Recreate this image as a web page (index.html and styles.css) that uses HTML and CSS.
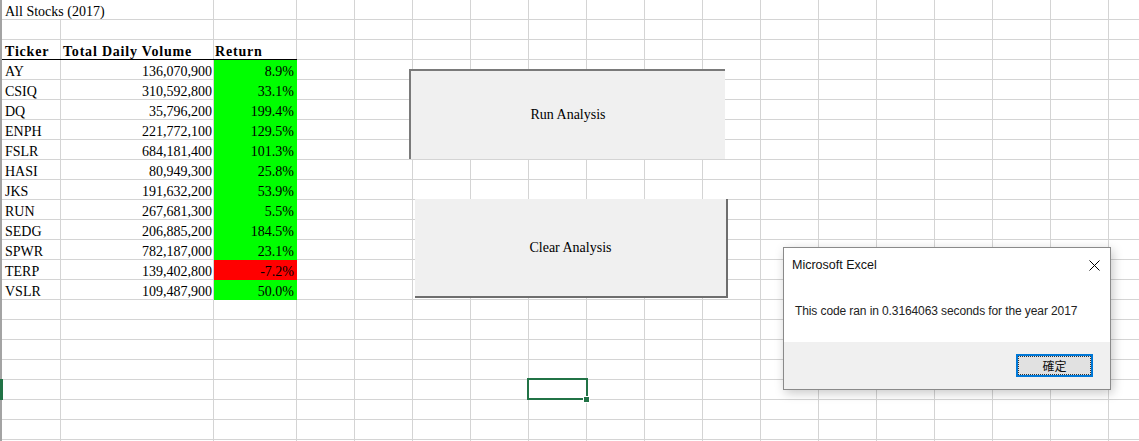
FILE: index.html
```html
<!DOCTYPE html>
<html lang="en">
<head>
<meta charset="utf-8">
<title>All Stocks (2017)</title>
<link rel="stylesheet" href="styles.css">
</head>
<body>
<div class="sheet">
  <div class="rail">
    <div class="rail-gap"></div>
    <div class="rail-active"></div>
  </div>
  <div class="cells">
    <div class="cell title">All Stocks (2017)</div>
    <div class="cell"></div>
    <div class="cell"></div>
    <div class="cell"></div>
    <div class="cell"></div>

    <div class="cell head">Ticker</div>
    <div class="cell head">Total Daily Volume</div>
    <div class="cell head">Return</div>

    <div class="cell">AY</div><div class="cell num">136,070,900</div><div class="cell pct up">8.9%</div>
    <div class="cell">CSIQ</div><div class="cell num">310,592,800</div><div class="cell pct up">33.1%</div>
    <div class="cell">DQ</div><div class="cell num">35,796,200</div><div class="cell pct up">199.4%</div>
    <div class="cell">ENPH</div><div class="cell num">221,772,100</div><div class="cell pct up">129.5%</div>
    <div class="cell">FSLR</div><div class="cell num">684,181,400</div><div class="cell pct up">101.3%</div>
    <div class="cell">HASI</div><div class="cell num">80,949,300</div><div class="cell pct up">25.8%</div>
    <div class="cell">JKS</div><div class="cell num">191,632,200</div><div class="cell pct up">53.9%</div>
    <div class="cell">RUN</div><div class="cell num">267,681,300</div><div class="cell pct up">5.5%</div>
    <div class="cell">SEDG</div><div class="cell num">206,885,200</div><div class="cell pct up">184.5%</div>
    <div class="cell">SPWR</div><div class="cell num">782,187,000</div><div class="cell pct up">23.1%</div>
    <div class="cell">TERP</div><div class="cell num">139,402,800</div><div class="cell pct down">-7.2%</div>
    <div class="cell">VSLR</div><div class="cell num">109,487,900</div><div class="cell pct up">50.0%</div>
  </div>

  <div class="btn btn-run">Run Analysis</div>
  <div class="btn btn-clear">Clear Analysis</div>

  <div class="selection"><span class="handle"></span></div>

  <div class="dialog">
    <div class="dlg-title">
      <span>Microsoft Excel</span>
      <svg class="dlg-close" width="11" height="11" viewBox="0 0 11 11"><path d="M0.5 0.5 L10.5 10.5 M10.5 0.5 L0.5 10.5" stroke="#000" stroke-width="1" fill="none"/></svg>
    </div>
    <div class="dlg-body">This code ran in 0.3164063 seconds for the year 2017</div>
    <div class="dlg-foot">
      <div class="dlg-ok"><span class="dlg-ok-inner">確定</span></div>
    </div>
  </div>
</div>
</body>
</html>
```
FILE: styles.css
```css
html, body {
  margin: 0;
  padding: 0;
  background: #fff;
}

.sheet {
  position: relative;
  width: 1139px;
  height: 441px;
  overflow: hidden;
  display: flex;
  align-items: flex-start;
  background-color: #fff;
  background-image:
    linear-gradient(#d4d4d4, #d4d4d4),
    linear-gradient(#d4d4d4, #d4d4d4),
    repeating-linear-gradient(to right, #d4d4d4 0 1px, transparent 1px 58px),
    repeating-linear-gradient(to bottom, transparent 0 19px, #d4d4d4 19px 20px);
  background-size: 1px 100%, 1px 100%, 843px 100%, 100% 100%;
  background-position: 60px 0, 213px 0, 296px 0, 0 0;
  background-repeat: no-repeat;
  font-family: "Liberation Serif", "Times New Roman", serif;
  font-size: 14px;
  color: #000;
}

.rail {
  width: 2px;
  height: 441px;
  background: #a3a3a3;
  display: flex;
  flex-direction: column;
  flex-shrink: 0;
}
.rail-gap { height: 379px; }
.rail-active { height: 21px; width: 3px; background: #217346; }

.cells {
  display: grid;
  grid-template-columns: 59px 153px 83px;
  grid-auto-rows: 20px;
}

.cell {
  box-sizing: border-box;
  height: 20px;
  padding: 4px 0 0 3px;
  line-height: 16px;
  white-space: nowrap;
}

.title {
  grid-column: span 2;
  background-image: linear-gradient(#fff, #fff);
  background-size: calc(100% - 1px) 19px;
  background-repeat: no-repeat;
}

.head {
  font-weight: bold;
  letter-spacing: 0.8px;
  box-shadow: inset 0 -1px 0 #000;
  padding-left: 3px;
}
.head:nth-child(7) { padding-left: 2px; }
.head:nth-child(8) { padding-left: 1px; }

.num {
  text-align: right;
  padding-left: 0;
  padding-right: 2px;
}

.pct {
  text-align: right;
  padding-left: 0;
  padding-right: 3px;
}
.up { background: #00ff00; }
.down { background: #ff0000; }

.btn {
  position: absolute;
  box-sizing: border-box;
  background: #f0f0f0;
  display: flex;
  align-items: center;
  justify-content: center;
  font-size: 14px;
}
.btn-run {
  left: 409px;
  top: 69px;
  width: 316px;
  height: 90px;
  border-top: 2px solid #7a7a7a;
  border-left: 2px solid #7a7a7a;
  padding-bottom: 1px;
}
.btn-clear {
  left: 415px;
  top: 199px;
  width: 313px;
  height: 99px;
  border-right: 2px solid #6e6e6e;
  border-bottom: 2px solid #6e6e6e;
  padding-top: 1px;
}

.selection {
  position: absolute;
  left: 527px;
  top: 378px;
  width: 61px;
  height: 22px;
  box-sizing: border-box;
  border: 2px solid #217346;
}
.handle {
  position: absolute;
  right: -4px;
  bottom: -5px;
  width: 5px;
  height: 5px;
  background: #217346;
  border: 1px solid #fff;
}

.dialog {
  position: absolute;
  left: 783px;
  top: 247px;
  width: 328px;
  height: 143px;
  box-sizing: border-box;
  border: 1px solid #8a8a8a;
  background: #fff;
  box-shadow: 2px 3px 10px rgba(0, 0, 0, 0.22);
  display: flex;
  flex-direction: column;
  font-family: "Liberation Sans", Arial, "Noto Sans CJK TC", sans-serif;
  font-size: 12px;
  color: #000;
}
.dlg-title {
  height: 33px;
  display: flex;
  align-items: center;
  justify-content: space-between;
  padding: 0 10px 0 8px;
  box-sizing: border-box;
  font-size: 12.5px;
  color: #111;
}
.dlg-close { display: block; margin-top: 1px; }
.dlg-body {
  height: 61px;
  display: flex;
  align-items: center;
  padding-left: 11px;
  letter-spacing: -0.1px;
  color: #222;
  padding-bottom: 2px;
  box-sizing: border-box;
}
.dlg-foot {
  flex: 1;
  background: #f0f0f0;
  display: flex;
  justify-content: flex-end;
  align-items: flex-start;
  padding: 12px 17px 0 0;
}
.dlg-ok {
  width: 77px;
  height: 23px;
  box-sizing: border-box;
  border: 2px solid #0078d7;
  background: #e1e1e1;
  display: flex;
}
.dlg-ok-inner {
  flex: 1;
  border: 1px dotted #333;
  display: flex;
  align-items: center;
  justify-content: center;
  font-family: "Noto Sans CJK TC", "Noto Sans CJK SC", sans-serif;
  font-size: 12px;
  color: #111;
}
```
